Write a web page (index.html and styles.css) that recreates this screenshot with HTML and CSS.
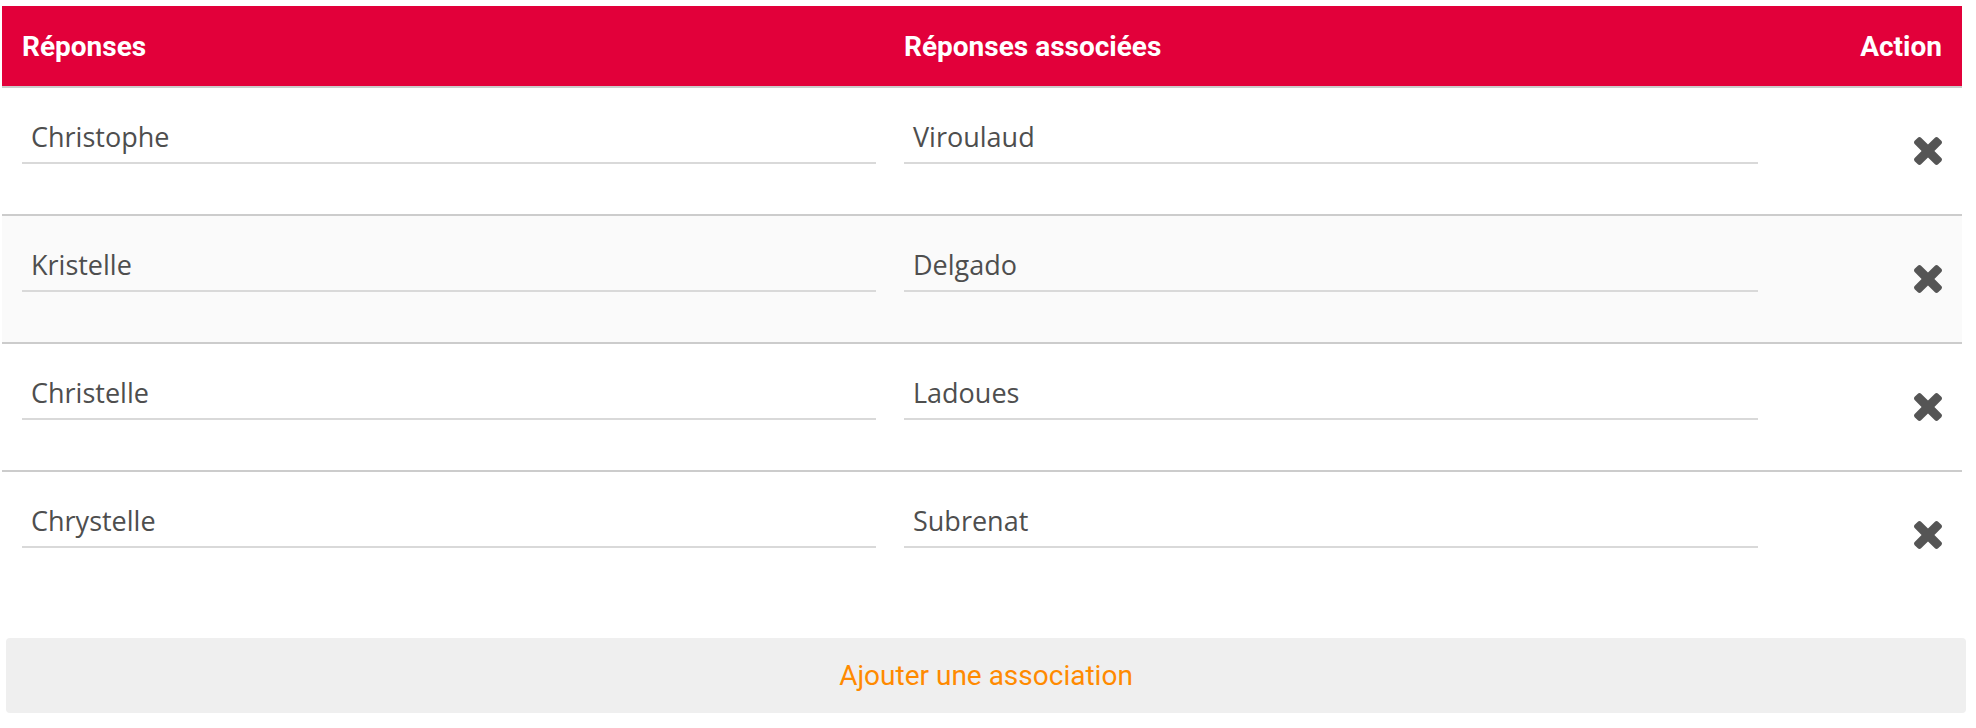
FILE: index.html
```html
<!DOCTYPE html>
<html lang="fr">
<head>
<meta charset="utf-8">
<title>Associations</title>
<link rel="stylesheet" href="styles.css">
</head>
<body>
<div class="page">
  <table class="assoc">
    <colgroup>
      <col class="c-main">
      <col class="c-main">
      <col class="c-action">
    </colgroup>
    <thead>
      <tr>
        <th class="h-left">Réponses</th>
        <th class="h-left">Réponses associées</th>
        <th class="h-right">Action</th>
      </tr>
    </thead>
    <tbody>
      <tr>
        <td class="cell"><div class="field">Christophe</div></td>
        <td class="cell"><div class="field">Viroulaud</div></td>
        <td class="act"><svg class="xicon" viewBox="110 366 1188 1188"><path d="M1298 1322q0 40-28 68l-136 136q-28 28-68 28t-68-28l-294-294-294 294q-28 28-68 28t-68-28l-136-136q-28-28-28-68t28-68l294-294-294-294q-28-28-28-68t28-68l136-136q28-28 68-28t68 28l294 294 294-294q28-28 68-28t68 28l136 136q28 28 28 68t-28 68l-294 294 294 294q28 28 28 68z"/></svg></td>
      </tr>
      <tr class="alt">
        <td class="cell"><div class="field">Kristelle</div></td>
        <td class="cell"><div class="field">Delgado</div></td>
        <td class="act"><svg class="xicon" viewBox="110 366 1188 1188"><path d="M1298 1322q0 40-28 68l-136 136q-28 28-68 28t-68-28l-294-294-294 294q-28 28-68 28t-68-28l-136-136q-28-28-28-68t28-68l294-294-294-294q-28-28-28-68t28-68l136-136q28-28 68-28t68 28l294 294 294-294q28-28 68-28t68 28l136 136q28 28 28 68t-28 68l-294 294 294 294q28 28 28 68z"/></svg></td>
      </tr>
      <tr>
        <td class="cell"><div class="field">Christelle</div></td>
        <td class="cell"><div class="field">Ladoues</div></td>
        <td class="act"><svg class="xicon" viewBox="110 366 1188 1188"><path d="M1298 1322q0 40-28 68l-136 136q-28 28-68 28t-68-28l-294-294-294 294q-28 28-68 28t-68-28l-136-136q-28-28-28-68t28-68l294-294-294-294q-28-28-28-68t28-68l136-136q28-28 68-28t68 28l294 294 294-294q28-28 68-28t68 28l136 136q28 28 28 68t-28 68l-294 294 294 294q28 28 28 68z"/></svg></td>
      </tr>
      <tr class="last">
        <td class="cell"><div class="field">Chrystelle</div></td>
        <td class="cell"><div class="field">Subrenat</div></td>
        <td class="act"><svg class="xicon" viewBox="110 366 1188 1188"><path d="M1298 1322q0 40-28 68l-136 136q-28 28-68 28t-68-28l-294-294-294 294q-28 28-68 28t-68-28l-136-136q-28-28-28-68t28-68l294-294-294-294q-28-28-28-68t28-68l136-136q28-28 68-28t68 28l294 294 294-294q28-28 68-28t68 28l136 136q28 28 28 68t-28 68l-294 294 294 294q28 28 28 68z"/></svg></td>
      </tr>
    </tbody>
  </table>
  <div class="add-wrap">
    <button class="add-btn" type="button">Ajouter une association</button>
  </div>
</div>
</body>
</html>
```
FILE: styles.css
```css
html, body {
  margin: 0;
  padding: 0;
  background: #ffffff;
}

.page {
  padding: 6px 14px 0 2px;
}

.assoc {
  width: 1960px;
  border-collapse: collapse;
  table-layout: fixed;
}

.c-main {
  width: 882px;
}

.c-action {
  width: 196px;
}

.assoc thead tr {
  background: #e2003a;
  border-bottom: 2px solid #cccccc;
}

.assoc th {
  height: 80px;
  padding: 0 20px;
  color: #ffffff;
  font-family: Roboto, "Liberation Sans", sans-serif;
  font-weight: 700;
  font-size: 28px;
  vertical-align: middle;
}

.h-left {
  text-align: left;
}

.h-right {
  text-align: right;
}

.assoc tbody tr {
  border-bottom: 2px solid #cccccc;
}

.assoc tbody tr.alt {
  background: #fafafa;
}

.assoc tbody tr.last {
  border-bottom: none;
}

.cell {
  height: 126px;
  padding: 0 8px 0 20px;
  vertical-align: top;
}

.field {
  margin-top: 24px;
  height: 50px;
  padding-left: 9px;
  border-bottom: 2px solid #d9d9d9;
  box-sizing: content-box;
  font-family: "Open Sans", "Noto Sans", sans-serif;
  font-size: 27px;
  line-height: 50px;
  color: #4e4e4e;
}

.act {
  padding: 0 20px 0 0;
  text-align: right;
  vertical-align: middle;
}

.xicon {
  display: inline-block;
  width: 28px;
  height: 28px;
  fill: #555555;
  vertical-align: middle;
}

.add-wrap {
  padding: 40px 0 0 4px;
}

.add-btn {
  display: block;
  width: 1960px;
  height: 75px;
  border: none;
  border-radius: 4px;
  background: #efefef;
  color: #ff8a00;
  font-family: Roboto, "Liberation Sans", sans-serif;
  font-size: 28px;
  font-weight: 400;
  cursor: pointer;
}
```
